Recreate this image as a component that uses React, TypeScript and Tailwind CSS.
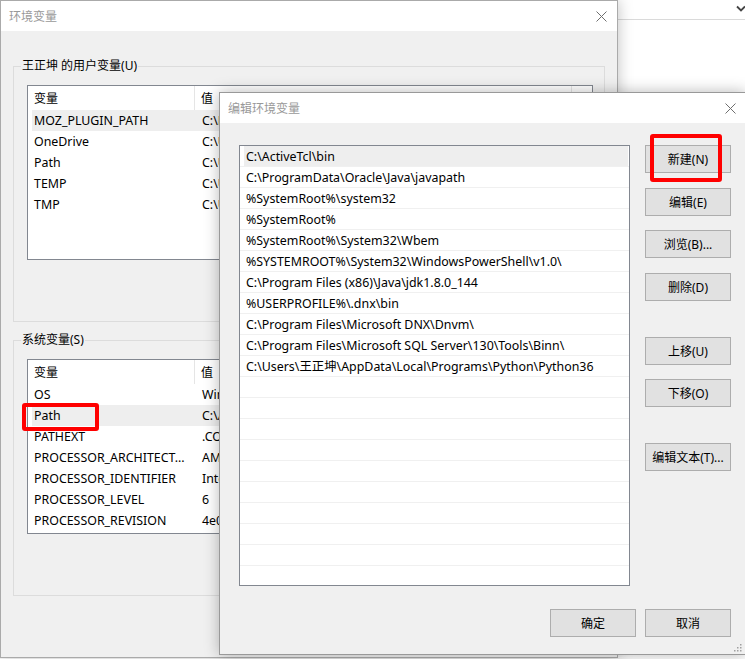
import React from 'react';

const userVars: [string, string][] = [
  ['MOZ_PLUGIN_PATH', 'C:\\Program Files (x86)\\Foxit Software\\Foxit Reader\\plugins\\'],
  ['OneDrive', 'C:\\Users\\王正坤\\OneDrive'],
  ['Path', 'C:\\Users\\王正坤\\AppData\\Local\\Programs\\Python\\Python36\\Scripts\\'],
  ['TEMP', 'C:\\Users\\王正坤\\AppData\\Local\\Temp'],
  ['TMP', 'C:\\Users\\王正坤\\AppData\\Local\\Temp'],
];

const sysVars: [string, string][] = [
  ['OS', 'Windows_NT'],
  ['Path', 'C:\\ActiveTcl\\bin;C:\\ProgramData\\Oracle\\Java\\javapath;'],
  ['PATHEXT', '.COM;.EXE;.BAT;.CMD;.VBS;.VBE;.JS;.JSE;.WSF;.WSH;.MSC'],
  ['PROCESSOR_ARCHITECT...', 'AMD64'],
  ['PROCESSOR_IDENTIFIER', 'Intel64 Family 6 Model 60 Stepping 3, GenuineIntel'],
  ['PROCESSOR_LEVEL', '6'],
  ['PROCESSOR_REVISION', '4e03'],
];

const paths = [
  'C:\\ActiveTcl\\bin',
  'C:\\ProgramData\\Oracle\\Java\\javapath',
  '%SystemRoot%\\system32',
  '%SystemRoot%',
  '%SystemRoot%\\System32\\Wbem',
  '%SYSTEMROOT%\\System32\\WindowsPowerShell\\v1.0\\',
  'C:\\Program Files (x86)\\Java\\jdk1.8.0_144',
  '%USERPROFILE%\\.dnx\\bin',
  'C:\\Program Files\\Microsoft DNX\\Dnvm\\',
  'C:\\Program Files\\Microsoft SQL Server\\130\\Tools\\Binn\\',
  'C:\\Users\\王正坤\\AppData\\Local\\Programs\\Python\\Python36',
];

function CloseIcon() {
  return (
    <svg width="11" height="11" viewBox="0 0 11 11">
      <path d="M0.5 0.5 L10.5 10.5 M10.5 0.5 L0.5 10.5" stroke="#6e6e6e" strokeWidth="1" fill="none" />
    </svg>
  );
}

function Grip() {
  return (
    <svg width="9" height="9" viewBox="0 0 9 9">
      <g fill="#a0a0a0">
        <rect x="7" y="1" width="1.5" height="1.5" />
        <rect x="4" y="4" width="1.5" height="1.5" />
        <rect x="7" y="4" width="1.5" height="1.5" />
        <rect x="1" y="7" width="1.5" height="1.5" />
        <rect x="4" y="7" width="1.5" height="1.5" />
        <rect x="7" y="7" width="1.5" height="1.5" />
      </g>
    </svg>
  );
}

function VarList({ rows, selected }: { rows: [string, string][]; selected: number }) {
  return (
    <div className="ml-[13px] mt-[11px] w-[566px] h-[175px] border border-[#828790] bg-white overflow-hidden text-[12.4px] leading-[16px]">
      <div className="flex h-[24px] items-center">
        <div className="w-[167px] shrink-0 h-full pl-[6px] pt-[1px] flex items-center border-r border-[#e5e5e5] text-[12px]">变量</div>
        <div className="w-[377px] shrink-0 h-full pl-[6px] pt-[1px] flex items-center border-r border-[#e5e5e5] text-[12px]">值</div>
      </div>
      {rows.map(([name, value], i) => (
        <div
          key={name}
          className={`ml-[4px] flex h-[21px] pt-[1px] items-center whitespace-nowrap ${i === selected ? 'bg-[#eeeeee]' : ''}`}
        >
          <div className="w-[166px] shrink-0 pl-[2px] overflow-hidden">{name}</div>
          <div className="shrink-0 pl-[4px]">{value}</div>
        </div>
      ))}
    </div>
  );
}

function Group({ label, rows, selected, className }: { label: string; rows: [string, string][]; selected: number; className: string }) {
  return (
    <div className={`w-[592px] h-[256px] border border-[#dcdcdc] flex flex-col ${className}`}>
      <div className="-mt-[9px] ml-[7px] px-[1px] w-fit leading-[16px] bg-[#f0f0f0]">{label}</div>
      <VarList rows={rows} selected={selected} />
    </div>
  );
}

function Btn({ children, className = '' }: { children: React.ReactNode; className?: string }) {
  return (
    <div className={`w-[86px] h-[28px] pt-[1px] leading-[16px] bg-[#e1e1e1] border border-[#adadad] flex items-center justify-center ${className}`}>
      {children}
    </div>
  );
}

export default function App() {
  return (
    <div className="relative w-[745px] h-[659px] overflow-hidden bg-white text-[12px] text-black font-['Noto_Sans','Noto_Sans_CJK_SC',sans-serif]">
      {/* background app */}
      <div className="h-[20px] border-b border-[#dadada] flex justify-end items-start">
        <svg width="10" height="7" viewBox="0 0 10 7" className="mt-[5px] -mr-[1px]">
          <path d="M1 1.5 L5 5.5 L9 1.5" stroke="#444" strokeWidth="1.8" fill="none" />
        </svg>
      </div>

      {/* 环境变量 window */}
      <div className="absolute left-0 top-0 w-[618px] h-[658px] bg-[#f0f0f0] border border-[#aaaaaa] shadow-[0_0_14px_rgba(0,0,0,0.25)] flex flex-col">
        <div className="h-[30px] bg-white flex items-center justify-between pl-[8px] pr-[10px]">
          <span className="text-[#999999] leading-[16px] pt-[1px]">环境变量</span>
          <CloseIcon />
        </div>
        <div className="pl-[12px] flex flex-col">
          <Group label="王正坤 的用户变量(U)" rows={userVars} selected={0} className="mt-[35px]" />
          <Group label="系统变量(S)" rows={sysVars} selected={1} className="mt-[18px]" />
        </div>
      </div>

      {/* 编辑环境变量 dialog */}
      <div className="absolute left-[219px] top-[92px] w-[527px] h-[563px] bg-[#f0f0f0] border border-[#999999] shadow-[0_0_14px_rgba(0,0,0,0.28)] flex flex-col">
        <div className="h-[30px] bg-white flex items-center justify-between pl-[8px] pr-[9px]">
          <span className="text-[#999999] leading-[16px] pt-[1px]">编辑环境变量</span>
          <CloseIcon />
        </div>
        <div className="flex pl-[19px] pt-[22px]">
          <div className="w-[391px] h-[441px] border border-[#828790] bg-white overflow-hidden text-[12.4px] leading-[16px]">
            {Array.from({ length: 21 }).map((_, i) => (
              <div key={i} className="h-[21px] border-b border-[#f0f0f0] flex">
                <div
                  className={`ml-[4px] mr-[1px] flex-1 pl-[2px] pt-[1px] flex items-center whitespace-nowrap ${i === 0 ? 'bg-[#eeeeee]' : ''}`}
                >
                  {paths[i] ?? ''}
                </div>
              </div>
            ))}
          </div>
          <div className="ml-[15px] flex flex-col">
            <Btn>新建(N)</Btn>
            <Btn className="mt-[15px]">编辑(E)</Btn>
            <Btn className="mt-[14px]">浏览(B)...</Btn>
            <Btn className="mt-[15px]">删除(D)</Btn>
            <Btn className="mt-[36px]">上移(U)</Btn>
            <Btn className="mt-[14px]">下移(O)</Btn>
            <Btn className="mt-[36px]">编辑文本(T)...</Btn>
          </div>
        </div>
        <div className="flex justify-end pr-[14px] mt-[23px] gap-[9px]">
          <Btn>确定</Btn>
          <Btn>取消</Btn>
        </div>
        <div className="flex justify-end mt-auto pr-[3px] pb-[2px]">
          <Grip />
        </div>
      </div>

      {/* red highlight boxes */}
      <div className="absolute left-[22px] top-[403px] w-[77px] h-[28px] border-4 border-[#ff0000] rounded-[3px]" />
      <div className="absolute left-[650px] top-[134px] w-[72px] h-[48px] border-4 border-[#ff0000] rounded-[3px]" />
    </div>
  );
}
